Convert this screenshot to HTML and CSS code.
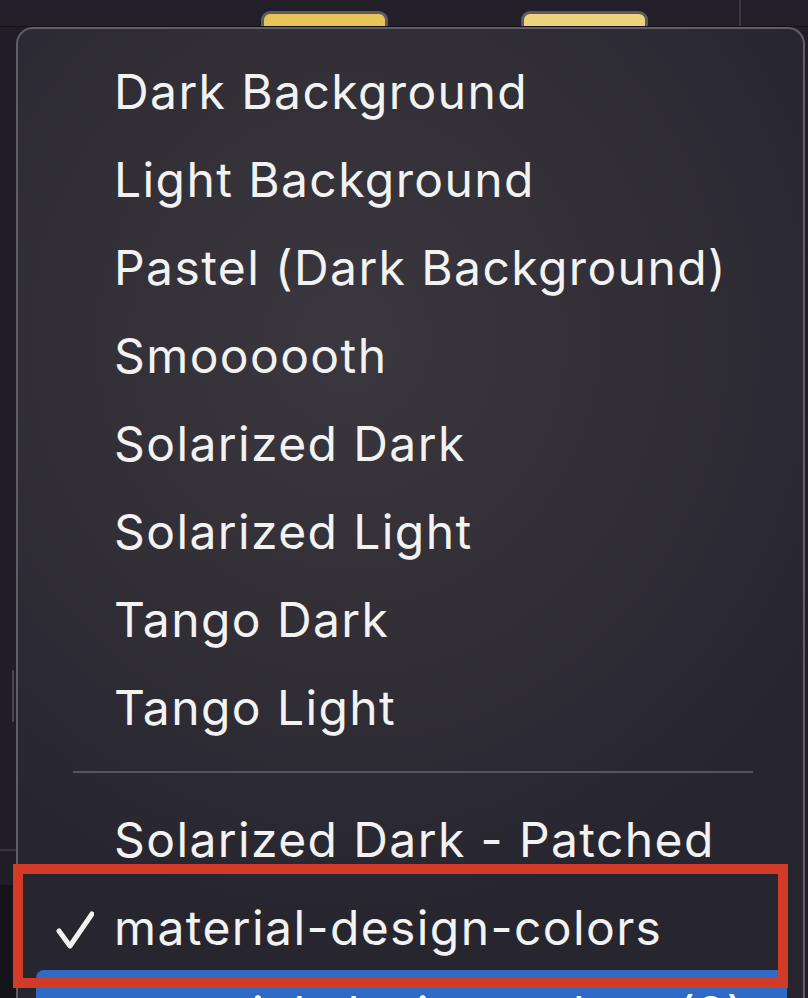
FILE: index.html
```html
<!DOCTYPE html>
<html lang="en">
    <head>
        <title>Color Presets</title>
        <meta charset="UTF-8">
        <meta name="viewport" content="width=device-width, initial-scale=1">
        <link rel="stylesheet" href="styles.css">
    </head>
    <body>
        <div class="topbar">
            <div class="tab"></div>
            <div class="tab tab-light"></div>
            <div class="divider"></div>
        </div>
        <div class="main">
            <div class="gutter">
                <div class="grip"></div>
                <div class="gutter-line"></div>
                <div class="gutter-dark"></div>
            </div>
            <div class="menu">
                <ul class="items">
                    <li class="item"><span class="check"></span>Dark Background</li>
                    <li class="item"><span class="check"></span>Light Background</li>
                    <li class="item"><span class="check"></span>Pastel (Dark Background)</li>
                    <li class="item"><span class="check"></span>Smoooooth</li>
                    <li class="item"><span class="check"></span>Solarized Dark</li>
                    <li class="item"><span class="check"></span>Solarized Light</li>
                    <li class="item"><span class="check"></span>Tango Dark</li>
                    <li class="item"><span class="check"></span>Tango Light</li>
                    <li class="separator"></li>
                    <li class="item"><span class="check"></span>Solarized Dark - Patched</li>
                    <li class="item selected">
                        <span class="check">
                            <svg width="38" height="38" viewBox="0 0 38 38">
                                <path d="M3 20 L14 35 L36 3" fill="none" stroke="#f2f2f2" stroke-width="5" stroke-linecap="round" stroke-linejoin="round"/>
                            </svg>
                        </span>material-design-colors
                    </li>
                    <li class="item active"><span class="check"></span>material-design-colors (2)</li>
                </ul>
            </div>
        </div>
        <div class="callout"></div>
    </body>
</html>
```

FILE: styles.css
```css
*{
    margin: 0;
    padding: 0;
    box-sizing: border-box;
}
body {
    width: 808px;
    height: 998px;
    overflow: hidden;
    background: #201d27;
    font-family: Inter, "Liberation Sans", sans-serif;
    position: relative;
}
.topbar {
    height: 27px;
    display: flex;
    align-items: flex-start;
    padding-left: 261px;
    overflow: hidden;
    background: #221f29;
    border-bottom: 1px solid #141218;
}
.topbar .tab {
    width: 127px;
    height: 24px;
    margin-top: 11px;
    background: #e6c457;
    border: 3px solid #5c5b60;
    border-bottom: none;
    border-radius: 9px 9px 0 0;
}
.topbar .tab-light {
    margin-left: 133px;
    background: #ecd37c;
}
.topbar .divider {
    width: 2px;
    height: 27px;
    margin-left: 91px;
    background: #3a3841;
}
.main {
    height: 971px;
    display: flex;
}
.gutter {
    width: 16px;
    display: flex;
    flex-direction: column;
}
.gutter .grip {
    width: 2px;
    height: 52px;
    margin-top: 643px;
    margin-left: 12px;
    background: #46444c;
}
.gutter .gutter-line {
    height: 2px;
    margin-top: 127px;
    background: #37353d;
}
.gutter .gutter-dark {
    flex: 1;
    margin-top: 34px;
    background: #141317;
}
.menu {
    width: 789px;
    height: 100%;
    border: 2px solid #5f5d65;
    border-bottom: none;
    border-radius: 17px 17px 0 0;
    background: radial-gradient(ellipse 70% 60% at 42% 32%, #3a373e 0%, #312e36 55%, #27262e 100%);
    overflow: hidden;
}
.items {
    list-style: none;
    padding-top: 19px;
}
.item {
    height: 88px;
    display: flex;
    align-items: center;
    padding-left: 36px;
    font-size: 48px;
    line-height: 88px;
    letter-spacing: 1.4px;
    color: #f2f2f2;
}
.item .check {
    width: 60px;
    height: 88px;
    display: flex;
    align-items: center;
    padding-left: 2px;
}
.item .check svg {
    display: block;
    margin-top: 4px;
}
.separator {
    height: 44px;
    padding-top: 19px;
    margin: 0 50px 0 55px;
}
.separator::before {
    content: "";
    display: block;
    height: 2px;
    background: #56545c;
}
.item.active {
    margin: -2px 16px 0 18px;
    padding-left: 18px;
    border-radius: 8px;
    background: #2f6bc6;
    color: #ffffff;
}
.callout {
    position: absolute;
    left: 13px;
    top: 864px;
    width: 775px;
    height: 124px;
    border: 10px solid #d23b27;
}
```
